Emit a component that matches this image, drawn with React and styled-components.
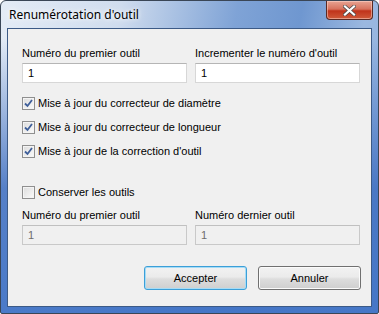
import React, { useState } from "react";
import styled, { createGlobalStyle } from "styled-components";

const Global = createGlobalStyle`
    html, body { margin: 0; padding: 0; background: #ffffff; }
    body { font-family: "Liberation Sans", Arial, sans-serif; }
`;

const Window = styled.div`
    box-sizing: border-box;
    width: 379px;
    height: 314px;
    border: 1px solid #3a4656;
    border-radius: 6px 6px 2px 2px;
    background:
        linear-gradient(to bottom, rgba(70, 120, 200, 0) 0%, rgba(70, 120, 200, 0) 12%, rgba(62, 110, 192, 0.85) 60%, rgba(66, 116, 198, 0.95) 100%),
        linear-gradient(100deg, #e4ecf6 0%, #cfdcee 28%, #7fa3d6 55%, #6f97d0 70%, #9bb8e0 85%, #8eb0df 100%);
    display: flex;
    flex-direction: column;
    padding: 0 6px 6px 6px;
    overflow: hidden;
`;

const TitleBar = styled.div`
    height: 27px;
    display: flex;
    align-items: flex-start;
    justify-content: space-between;
`;

const Title = styled.div`
    font-family: "Noto Sans", "Open Sans", sans-serif;
    font-size: 12px;
    color: #000;
    padding: 5px 0 0 2px;
    text-shadow: 0 0 8px #ffffff, 0 0 4px #ffffff;
`;

const CloseButton = styled.div`
    width: 45px;
    height: 18px;
    margin-right: -1px;
    border: 1px solid #5a2a24;
    border-top: none;
    border-radius: 0 0 4px 4px;
    background: linear-gradient(#e8a493 0%, #d7725d 45%, #c0331b 55%, #cf5a3a 100%);
    box-shadow: inset 0 0 0 1px rgba(255, 220, 210, 0.5);
    display: flex;
    align-items: center;
    justify-content: center;
`;

const Client = styled.div`
    flex: 1;
    background: #f0f0f0;
    border: 1px solid #3c5a86;
    padding: 16px 10px 0 14px;
    display: flex;
    flex-direction: column;
`;

const FieldRow = styled.div`
    display: grid;
    grid-template-columns: 165px 165px;
    column-gap: 8px;
    margin-top: ${(p) => p.$top || 0}px;
`;

const Field = styled.div`
    display: flex;
    flex-direction: column;
`;

const Label = styled.div`
    font-size: 11px;
    color: #000;
    height: 16px;
    line-height: 16px;
    margin-bottom: 2px;
`;

const Input = styled.div`
    box-sizing: border-box;
    height: 20px;
    border: 1px solid ${(p) => (p.disabled ? "#c9c9c9" : "#d7d7d7")};
    border-top-color: ${(p) => (p.disabled ? "#c0c0c0" : "#b5b5b5")};
    background: ${(p) => (p.disabled ? "#f0f0f0" : "#ffffff")};
    color: ${(p) => (p.disabled ? "#6d6d6d" : "#000")};
    font-size: 11px;
    line-height: 18px;
    padding-left: 5px;
`;

const CheckList = styled.div`
    display: flex;
    flex-direction: column;
    gap: 10px;
    margin-top: 13px;
`;

const CheckRow = styled.label`
    display: flex;
    align-items: center;
    gap: 3px;
    font-size: 11px;
    height: 14px;
    color: #000;
`;

const Box = styled.span`
    box-sizing: border-box;
    width: 13px;
    height: 13px;
    border: 1px solid #8f8f8f;
    background: linear-gradient(135deg, #dcdcdc, #fbfbfb);
    box-shadow: inset 0 0 0 1px #f4f4f4;
    display: flex;
    align-items: center;
    justify-content: center;
`;

const Separate = styled.div`
    margin-top: 27px;
`;

const Buttons = styled.div`
    display: flex;
    justify-content: flex-end;
    gap: 11px;
    margin-top: 21px;
`;

const Button = styled.div`
    box-sizing: border-box;
    width: 103px;
    height: 24px;
    border-radius: 3px;
    border: 1px solid ${(p) => (p.$default ? "#3c9fd8" : "#707070")};
    background: linear-gradient(#f2f2f2 0%, #ebebeb 45%, #dddddd 55%, #cfcfcf 100%);
    box-shadow: inset 0 0 0 1px ${(p) => (p.$default ? "#a6dcf6" : "#fbfbfb")};
    font-size: 11px;
    display: flex;
    align-items: center;
    justify-content: center;
    color: #000;
`;

const Check = ({ checked }) => (
    <Box>
        {checked && (
            <svg width="9" height="9" viewBox="0 0 9 9">
                <path d="M1 4.5 L3.5 7 L8 1" fill="none" stroke="#3f5f9a" strokeWidth="1.8" />
            </svg>
        )}
    </Box>
);

const CheckItem = ({ checked, children }) => (
    <CheckRow>
        <Check checked={checked} />
        <span>{children}</span>
    </CheckRow>
);

const App = () => {
    const [first] = useState("1");
    const [step] = useState("1");

    return (
        <>
            <Global />
            <Window>
                <TitleBar>
                    <Title>Renumérotation d'outil</Title>
                    <CloseButton>
                        <svg width="13" height="11" viewBox="0 0 13 11">
                            <path d="M2 1.5 L11 9.5 M11 1.5 L2 9.5" stroke="#4a4a4a" strokeWidth="3.6" strokeLinecap="square" />
                            <path d="M2 1.5 L11 9.5 M11 1.5 L2 9.5" stroke="#ffffff" strokeWidth="2.2" strokeLinecap="square" />
                        </svg>
                    </CloseButton>
                </TitleBar>
                <Client>
                    <FieldRow>
                        <Field>
                            <Label>Numéro du premier outil</Label>
                            <Input>{first}</Input>
                        </Field>
                        <Field>
                            <Label>Incrementer le numéro d'outil</Label>
                            <Input>{step}</Input>
                        </Field>
                    </FieldRow>
                    <CheckList>
                        <CheckItem checked>Mise à jour du correcteur de diamètre</CheckItem>
                        <CheckItem checked>Mise à jour du correcteur de longueur</CheckItem>
                        <CheckItem checked>Mise à jour de la correction d'outil</CheckItem>
                    </CheckList>
                    <Separate>
                        <CheckItem>Conserver les outils</CheckItem>
                    </Separate>
                    <FieldRow $top={8}>
                        <Field>
                            <Label>Numéro du premier outil</Label>
                            <Input disabled>1</Input>
                        </Field>
                        <Field>
                            <Label>Numéro dernier outil</Label>
                            <Input disabled>1</Input>
                        </Field>
                    </FieldRow>
                    <Buttons>
                        <Button $default>Accepter</Button>
                        <Button>Annuler</Button>
                    </Buttons>
                </Client>
            </Window>
        </>
    );
};

export default App;
